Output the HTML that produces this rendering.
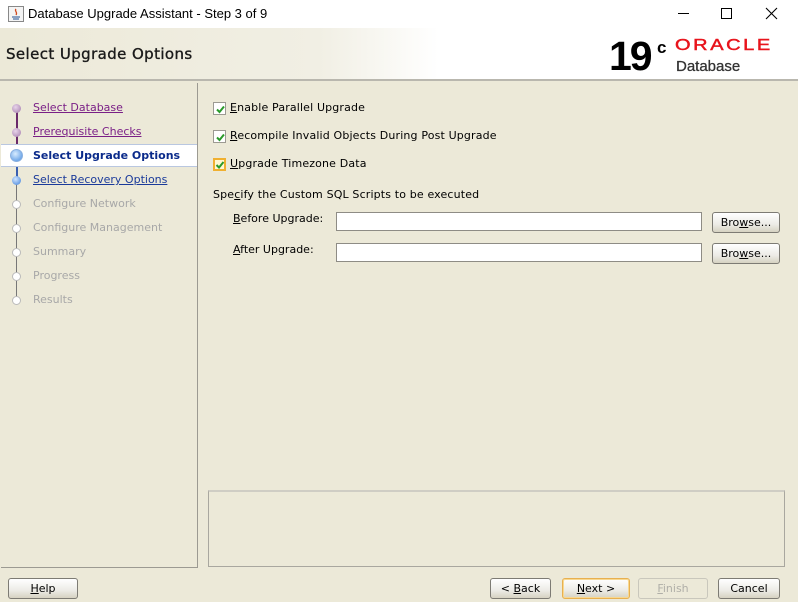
<!DOCTYPE html>
<html><head><meta charset="utf-8"><style>
*{margin:0;padding:0;box-sizing:border-box}
body{width:798px;height:602px;overflow:hidden;background:#ECE9D8;font-family:"DejaVu Sans","Liberation Sans",sans-serif;font-size:11px;color:#000;position:relative}
.a{position:absolute}
.title{left:0;top:0;width:798px;height:28px;background:#fff}
.title span{position:absolute;left:28px;top:6px;font-family:"Liberation Sans",sans-serif;font-size:13px;color:#000}
.hdr{left:0;top:28px;width:798px;height:53px;background:linear-gradient(90deg,#ECE9D8 0%,#F1EFE4 40%,#fff 55%,#fff 100%);border-bottom:2px solid #B9B7AE}
.hdr .t{position:absolute;left:6px;top:17px;font-size:15px;font-family:"DejaVu Sans",sans-serif;color:#1a1a1a;letter-spacing:0.4px;-webkit-text-stroke:0.35px #1a1a1a}
.left{left:1px;top:83px;width:197px;height:485px;border-right:1px solid #9c9a92;border-bottom:1px solid #9c9a92}
.step{position:absolute;left:32px;font-size:11px}
.dot{position:absolute;width:9px;height:9px;border-radius:50%}
.cb{position:absolute;width:13px;height:13px;border:1px solid #9c9a92;background:#fff;left:213px}
.cb svg{position:absolute;left:1px;top:1px}
.lbl{position:absolute;left:230px;letter-spacing:0.15px}
.inp{position:absolute;left:336px;width:366px;height:19px;background:#fff;border:1px solid #8e8c85}
.btn{position:absolute;height:21px;border:1px solid #7d7b74;border-radius:3px;background:linear-gradient(#fff,#ECEBE6 60%,#D6D2C2);text-align:center;line-height:19px;font-size:11px}
u{text-decoration:underline}
</style></head><body>
<div class="a title">
<svg class="a" style="left:8px;top:6px" width="16" height="16"><rect x="0.5" y="0.5" width="15" height="15" fill="#f4f4f4" stroke="#888"/><path d="M4 11h8M5 13h6" stroke="#4a6fa5" stroke-width="1.2"/><path d="M8 3c-2 2 2 3 0 6" stroke="#d04a20" fill="none" stroke-width="1.3"/></svg>
<span>Database Upgrade Assistant - Step 3 of 9</span>
<div class="a" style="left:678px;top:13px;width:11px;height:1px;background:#000"></div>
<div class="a" style="left:721px;top:8px;width:11px;height:11px;border:1px solid #000"></div>
<svg class="a" style="left:765px;top:7px" width="13" height="13"><path d="M1 1L12 12M12 1L1 12" stroke="#000" stroke-width="1.1"/></svg>
</div>
<div class="a hdr"><div class="t">Select Upgrade Options</div>
<div class="a" style="left:609px;top:6px;font-family:'Liberation Sans',sans-serif;font-weight:bold;font-size:41px;letter-spacing:-2px;line-height:44px;color:#000">19</div>
<div class="a" style="left:657px;top:10px;font-family:'Liberation Sans',sans-serif;font-weight:bold;font-size:17px;color:#000">c</div>
<div class="a" style="left:675px;top:9px;font-family:'Liberation Sans',sans-serif;font-size:20px;color:#E8141C;letter-spacing:2.6px;line-height:20px;-webkit-text-stroke:0.6px #E8141C;transform:scaleY(0.8);transform-origin:top left">ORACLE</div>
<div class="a" style="left:676px;top:30px;font-family:'Liberation Sans',sans-serif;font-size:15px;color:#333;-webkit-text-stroke:0.3px #333">Database</div>
</div>
<div class="a left">
<div class="a" style="left:15px;top:24px;width:2px;height:38px;background:#6a2a6a"></div>
<div class="a" style="left:15px;top:62px;width:2px;height:36px;background:#3a5fb0"></div>
<div class="a" style="left:15px;top:98px;width:1px;height:118px;background:#777"></div>
<div class="a" style="left:0;top:61px;width:196px;height:23px;background:#fff;border-top:1px solid #b9c7e0;border-bottom:1px solid #b9c7e0"></div>
<div class="dot" style="left:11px;top:21px;background:radial-gradient(circle at 40% 35%,#e8d4ea,#a27aaa)"></div>
<div class="dot" style="left:11px;top:45px;background:radial-gradient(circle at 40% 35%,#e8d4ea,#a27aaa)"></div>
<div class="dot" style="left:9px;top:66px;width:13px;height:13px;border:1px solid #8ab0e0;background:radial-gradient(circle at 40% 35%,#d8ecff,#4a8ee0)"></div>
<div class="dot" style="left:11px;top:93px;background:radial-gradient(circle at 40% 35%,#cfe4ff,#3c7ed8)"></div>
<div class="dot" style="left:11px;top:117px;background:#fff;border:1px solid #bbb"></div>
<div class="dot" style="left:11px;top:141px;background:#fff;border:1px solid #bbb"></div>
<div class="dot" style="left:11px;top:165px;background:#fff;border:1px solid #bbb"></div>
<div class="dot" style="left:11px;top:189px;background:#fff;border:1px solid #bbb"></div>
<div class="dot" style="left:11px;top:213px;background:#fff;border:1px solid #bbb"></div>
<div class="step" style="top:18px;color:#7a1f86;text-decoration:underline">Select Database</div>
<div class="step" style="top:42px;color:#7a1f86;text-decoration:underline">Prerequisite Checks</div>
<div class="step" style="top:66px;color:#0a2a8a;font-weight:bold">Select Upgrade Options</div>
<div class="step" style="top:90px;color:#1a3a9a;text-decoration:underline">Select Recovery Options</div>
<div class="step" style="top:114px;color:#a8a8a8">Configure Network</div>
<div class="step" style="top:138px;color:#a8a8a8">Configure Management</div>
<div class="step" style="top:162px;color:#a8a8a8">Summary</div>
<div class="step" style="top:186px;color:#a8a8a8">Progress</div>
<div class="step" style="top:210px;color:#a8a8a8">Results</div>
</div>
<div class="cb" style="top:102px"><svg width="11" height="11"><path d="M2 5.5L4.5 8L9 2.5" stroke="#2a9a2a" stroke-width="2" fill="none"/></svg></div>
<div class="lbl" style="top:101px"><u>E</u>nable Parallel Upgrade</div>
<div class="cb" style="top:130px"><svg width="11" height="11"><path d="M2 5.5L4.5 8L9 2.5" stroke="#2a9a2a" stroke-width="2" fill="none"/></svg></div>
<div class="lbl" style="top:129px"><u>R</u>ecompile Invalid Objects During Post Upgrade</div>
<div class="cb" style="top:158px;border:2px solid #f0b030;background:#fff7d0"><svg width="11" height="11" style="left:0;top:0"><path d="M1.5 5L4 7.5L8.5 2" stroke="#2a9a2a" stroke-width="2" fill="none"/></svg></div>
<div class="lbl" style="top:157px"><u>U</u>pgrade Timezone Data</div>
<div class="a" style="left:213px;top:188px;letter-spacing:0.15px">Spe<u>c</u>ify the Custom SQL Scripts to be executed</div>
<div class="a" style="left:233px;top:212px"><u>B</u>efore Upgrade:</div>
<div class="inp" style="top:212px"></div>
<div class="btn" style="left:712px;top:212px;width:68px">Bro<u>w</u>se...</div>
<div class="a" style="left:233px;top:243px"><u>A</u>fter Upgrade:</div>
<div class="inp" style="top:243px"></div>
<div class="btn" style="left:712px;top:243px;width:68px">Bro<u>w</u>se...</div>
<div class="a" style="left:208px;top:490px;width:577px;height:77px;border:1px solid #a9a79f;border-top:2px solid #cfcdc4"></div>
<div class="btn" style="left:8px;top:578px;width:70px"><u>H</u>elp</div>
<div class="btn" style="left:490px;top:578px;width:61px">&lt; <u>B</u>ack</div>
<div class="btn" style="left:562px;top:578px;width:68px;border-color:#e8b050;box-shadow:inset 0 0 0 1px #f8d890"><u>N</u>ext &gt;</div>
<div class="btn" style="left:638px;top:578px;width:70px;color:#b0afa8;border-color:#c9c7bc;background:#ECE9D8"><u>F</u>inish</div>
<div class="btn" style="left:718px;top:578px;width:62px">Cancel</div>
</body></html>
